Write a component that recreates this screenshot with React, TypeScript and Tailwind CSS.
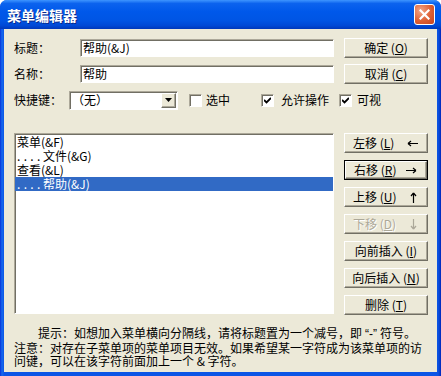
import type { ReactNode } from "react";

const raised =
  "bg-[#ECE9D8] border border-t-white border-l-white border-b-[#716F64] border-r-[#716F64] shadow-[inset_-1px_-1px_0_#ACA899]";
const sunken =
  "bg-white border border-t-[#ACA899] border-l-[#ACA899] border-b-white border-r-white shadow-[inset_1px_1px_0_#716F64]";

const Arrow = ({ dir, color = "#000" }: { dir: "l" | "r" | "u" | "d"; color?: string }) => {
  const paths = {
    l: "M1 4.5H11M1 4.5L4 2M1 4.5L4 7",
    r: "M0 4.5H10M10 4.5L7 2M10 4.5L7 7",
    u: "M4.5 1V11M4.5 1L2 4M4.5 1L7 4",
    d: "M4.5 0V10M4.5 10L2 7M4.5 10L7 7",
  };
  const horiz = dir === "l" || dir === "r";
  return (
    <svg
      width={horiz ? 11 : 9}
      height={horiz ? 9 : 11}
      viewBox={horiz ? "0 0 11 9" : "0 0 9 11"}
      fill="none"
      stroke={color}
      strokeWidth="1.2"
    >
      <path d={paths[dir]} />
    </svg>
  );
};

const Btn = ({
  children,
  focused = false,
  className = "",
}: {
  children: ReactNode;
  focused?: boolean;
  className?: string;
}) => (
  <div className={`h-[20px] w-[84px] ${focused ? "border border-black" : ""}`}>
    <div className={`flex h-full w-full items-center ${raised} ${className}`}>{children}</div>
  </div>
);

const Check = ({ checked }: { checked?: boolean }) => (
  <div className={`flex h-[13px] w-[13px] items-center justify-center ${sunken}`}>
    {checked && (
      <svg width="7" height="7" viewBox="0 0 7 7">
        <path d="M0 3L2.5 5.5L7 1" fill="none" stroke="#000" strokeWidth="1.8" />
      </svg>
    )}
  </div>
);

const Dots = ({ light }: { light?: boolean }) => (
  <span className={`inline-block w-[26px] tracking-[3.3px] ${light ? "text-white" : ""}`}>....</span>
);

const items = [
  { dots: false, text: "菜单(&F)" },
  { dots: true, text: "文件(&G)" },
  { dots: false, text: "查看(&L)" },
  { dots: true, text: "帮助(&J)", sel: true },
];

const moves: { label: string; key: string; dir: "l" | "r" | "u" | "d"; focused?: boolean; disabled?: boolean }[] = [
  { label: "左移", key: "L", dir: "l" },
  { label: "右移", key: "R", dir: "r", focused: true },
  { label: "上移", key: "U", dir: "u" },
  { label: "下移", key: "D", dir: "d", disabled: true },
];

export default function App() {
  return (
    <div className="h-[376px] w-[441px] font-['Noto_Sans_CJK_SC','Liberation_Sans',sans-serif] text-[12px] leading-[14px] text-black">
      <div className="flex h-full flex-col overflow-hidden rounded-t-[7px] bg-[linear-gradient(90deg,#0831D9_0px,#166AEE_2px,#0B55E6_4px,#0B55E6_437px,#0A4BD8_439px,#0024B8_441px)]">
        {/* title bar */}
        <div className="flex h-[29px] shrink-0 items-center justify-between bg-[linear-gradient(180deg,#3E95FF_0%,#0C63EE_12%,#0058EA_40%,#0055E4_70%,#0049D6_88%,#0038BA_100%)] pl-[7px] pr-[6px]">
          <span className="pt-[1px] text-[14px] font-bold leading-none text-white [text-shadow:1px_1px_0_#0A2A8C]">
            菜单编辑器
          </span>
          <div className="flex h-[21px] w-[21px] items-center justify-center rounded-[3px] border border-white bg-[radial-gradient(circle_at_30%_30%,#F2A688,#DE5F33_55%,#C8431E)]">
            <svg width="11" height="11" viewBox="0 0 11 11">
              <path d="M1.5 1.5L9.5 9.5M9.5 1.5L1.5 9.5" stroke="#fff" strokeWidth="2.2" strokeLinecap="square" />
            </svg>
          </div>
        </div>

        {/* body */}
        <div className="mx-[4px] mb-[4px] flex-1 bg-[#ECE9D8] pl-[10px] pr-[9px] pt-[9px]">
          <div className="flex flex-col gap-[6px]">
            <div className="flex h-[20px] items-center">
              <span className="w-[66px]">标题：</span>
              <div className={`flex h-[18px] w-[254px] items-center pl-[2px] ${sunken}`}>帮助(&amp;J)</div>
              <div className="ml-[10px]">
                <Btn className="justify-center">
                  确定 (<u>O</u>)
                </Btn>
              </div>
            </div>
            <div className="flex h-[20px] items-center">
              <span className="w-[66px]">名称：</span>
              <div className={`flex h-[18px] w-[254px] items-center pl-[2px] ${sunken}`}>帮助</div>
              <div className="ml-[10px]">
                <Btn className="justify-center">
                  取消 (<u>C</u>)
                </Btn>
              </div>
            </div>
            <div className="flex h-[20px] items-center">
              <span className="w-[55px]">快捷键：</span>
              <div className={`flex h-[19px] w-[109px] items-center justify-between pl-[2px] pr-[1px] ${sunken}`}>
                <span>（无）</span>
                <div className={`flex h-[15px] w-[15px] items-center justify-center ${raised}`}>
                  <svg width="7" height="4" viewBox="0 0 7 4">
                    <path d="M0 0H7L3.5 4Z" fill="#000" />
                  </svg>
                </div>
              </div>
              <div className="ml-[11px] flex items-center gap-[4px]">
                <Check />
                <span>选中</span>
              </div>
              <div className="ml-[31px] flex items-center gap-[7px]">
                <Check checked />
                <span>允许操作</span>
              </div>
              <div className="ml-[10px] flex items-center gap-[5px]">
                <Check checked />
                <span>可视</span>
              </div>
            </div>
          </div>

          {/* list + move buttons */}
          <div className="mt-[23px] flex gap-[10px]">
            <div className={`h-[181px] w-[320px] pt-[1px] ${sunken}`}>
              {items.map((it) => (
                <div
                  key={it.text}
                  className={`flex h-[14px] items-center pl-[2px] ${it.sel ? "bg-[#316AC5] text-white" : ""}`}
                >
                  {it.dots && <Dots light={it.sel} />}
                  <span>{it.text}</span>
                </div>
              ))}
            </div>
            <div className="flex flex-col gap-[7px]">
              {moves.map((m) => (
                <Btn key={m.label} focused={m.focused} className="justify-between pl-[8px] pr-[9px]">
                  <span className={m.disabled ? "text-[#ACA899] [text-shadow:1px_1px_0_#fff]" : ""}>
                    {m.label} (<u>{m.key}</u>)
                  </span>
                  <Arrow dir={m.dir} color={m.disabled ? "#ACA899" : "#000"} />
                </Btn>
              ))}
              <Btn className="justify-center">
                向前插入 (<u>I</u>)
              </Btn>
              <Btn className="justify-center">
                向后插入 (<u>N</u>)
              </Btn>
              <Btn className="justify-center">
                删除 (<u>T</u>)
              </Btn>
            </div>
          </div>

          {/* hint */}
          <div className="mt-[11px] leading-[13px]">
            <div className="pl-[24px]">
              提示：如想加入菜单横向分隔线，请将标题置为一个减号，即
              <span className="px-[3px] font-['Liberation_Sans',sans-serif]">“-”</span>
              符号。
            </div>
            <div>注意：对存在子菜单项的菜单项目无效。如果希望某一字符成为该菜单项的访</div>
            <div>问键，可以在该字符前面加上一个 &amp; 字符。</div>
          </div>
        </div>
      </div>
    </div>
  );
}
